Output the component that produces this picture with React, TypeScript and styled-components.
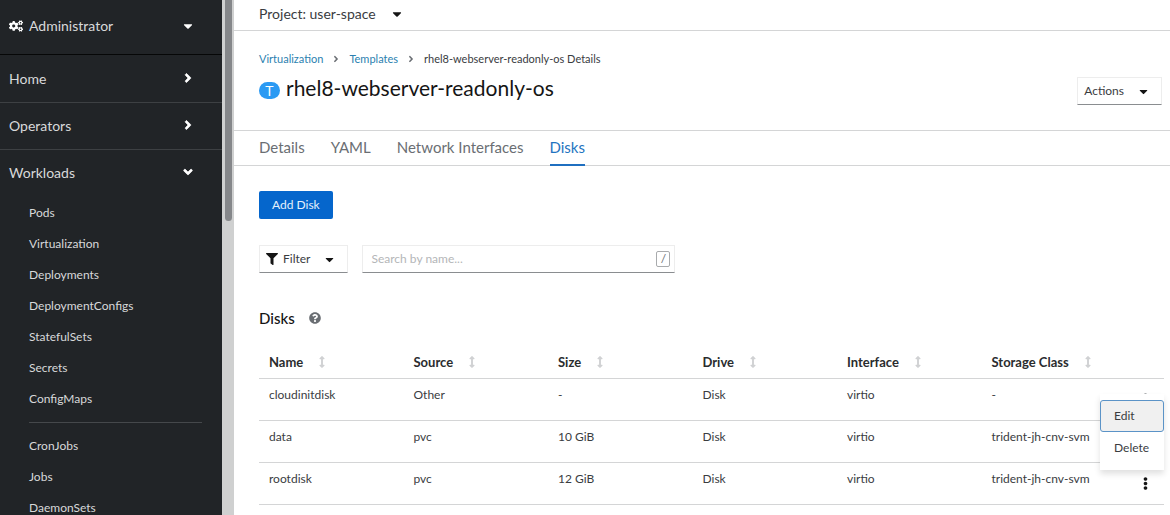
import React from "react";
import styled, { createGlobalStyle } from "styled-components";
import {
  FaAngleDown,
  FaAngleRight,
  FaArrowsAltV,
  FaCaretDown,
  FaCogs,
  FaEllipsisV,
  FaFilter,
  FaQuestionCircle,
} from "react-icons/fa";

const GlobalStyle = createGlobalStyle`
  * { box-sizing: border-box; }
  body {
    margin: 0;
    background: #fff;
    color: #3a3c3f;
    font-family: Lato, "Liberation Sans", sans-serif;
    font-size: 12px;
    line-height: 16px;
  }
  button, input { font: inherit; color: inherit; }
  button { cursor: pointer; }
  a { color: inherit; text-decoration: none; }
  ul, ol { list-style: none; margin: 0; padding: 0; }
  h1, h2 { margin: 0; }
`;

const Layout = styled.div`
  display: flex;
  height: 100vh;
  overflow: hidden;
`;

/* Sidebar */

const Sidebar = styled.aside`
  display: flex;
  flex: 0 0 234px;
`;

const Nav = styled.nav`
  flex: 1;
  overflow-y: auto;
  scrollbar-width: none;
  background: #212427;
  color: #d8d9da;
`;

const ScrollTrack = styled.div`
  width: 12px;
  padding: 0 2px 0 3px;
  background: #cfd0d0;
`;

const ScrollThumb = styled.div`
  height: 43%;
  border-radius: 0 0 4px 4px;
  background: #85878a;
`;

const Perspective = styled.button`
  display: flex;
  align-items: center;
  width: 100%;
  height: 55px;
  padding: 0 27px 2px 9px;
  border: 0;
  border-bottom: 1px solid #060707;
  background: transparent;
  font-size: 14px;
  gap: 6px;

  svg { color: #fff; }
  svg:last-child { margin-left: auto; }
`;

const Sections = styled.ul`
  padding-top: 1px;
`;

const SectionToggle = styled.button`
  display: flex;
  align-items: center;
  justify-content: space-between;
  width: 100%;
  height: 46px;
  padding: 0 27px 0 9px;
  border: 0;
  background: transparent;
  font-size: 14px;

  svg { color: #fff; margin-bottom: 2px; }
`;

const Section = styled.li`
  & + & { border-top: 1px solid #3d4043; }
`;

const SubList = styled.ul`
  padding-left: 29px;
  margin-top: 1px;
  margin-right: 20px;

  & + & { margin-top: 8px; }
  & + &::before {
    content: "";
    display: block;
    height: 1px;
    margin-bottom: 7px;
    background: #45484b;
  }
`;

const SubLink = styled.a`
  display: block;
  line-height: 31px;
`;

/* Main column */

const Main = styled.main`
  flex: 1;
  min-width: 0;
  overflow: hidden;
`;

const ProjectBar = styled.div`
  height: 31px;
  padding: 0 25px;
  border-bottom: 1px solid #d4d5d6;
`;

const ProjectButton = styled.button`
  display: flex;
  align-items: center;
  height: 28px;
  gap: 14px;
  padding: 0;
  border: 0;
  background: transparent;
  font-size: 14px;

  svg { color: #151515; }
`;

const PageHeader = styled.header`
  display: flex;
  align-items: flex-start;
  justify-content: space-between;
  height: 100px;
  padding: 20px 8px 0 25px;
  border-bottom: 1px solid #d4d5d6;
`;

const Crumbs = styled.ol`
  display: flex;
  gap: 8px;
  font-size: 11px;
`;

const Crumb = styled.li`
  display: flex;
  align-items: center;
  gap: 8px;

  a { color: #2b7fb0; }
  svg { color: #6a6e73; }
`;

const Title = styled.h1`
  display: flex;
  align-items: center;
  gap: 6px;
  margin-top: 7px;
  color: #151515;
  font-size: 21px;
  font-weight: 400;
  line-height: 28px;
`;

const Badge = styled.span`
  width: 21px;
  margin-top: 4px;
  border-radius: 9px;
  background: #2b9af3;
  color: #fff;
  font-size: 14px;
  line-height: 17px;
  text-align: center;
`;

const MenuToggle = styled.button`
  display: flex;
  align-items: center;
  height: 28px;
  padding: 0 11px 0 6px;
  border: 1px solid #ededed;
  border-bottom-color: #8a8d90;
  background: #fff;
  color: #3a3c3f;
`;

const ToggleLabel = styled.span`
  margin-right: 13px;

  svg + & { margin-left: 5px; }
`;

const ActionsSlot = styled.div`
  margin-top: 26px;
`;

const Tabs = styled.nav`
  display: flex;
  gap: 26px;
  height: 35px;
  padding: 0 25px;
  border-bottom: 1px solid #d4d5d6;
  font-size: 15px;
`;

const Tab = styled.a<{ $active?: boolean }>`
  height: 35px;
  border-bottom: 2px solid ${(p) => (p.$active ? "#1f6fc0" : "transparent")};
  color: ${(p) => (p.$active ? "#1f74c0" : "#6a6e73")};
  line-height: 33px;
`;

const Content = styled.div`
  padding: 25px 6px 0 25px;
`;

const PrimaryButton = styled.button`
  display: block;
  height: 28px;
  padding: 0 13px;
  border: 0;
  border-radius: 2px;
  background: #0566cc;
  color: #e4f0fb;
`;

const Toolbar = styled.div`
  display: flex;
  gap: 14px;
  margin-top: 26px;
`;

const SearchBox = styled.label`
  display: flex;
  align-items: center;
  width: 313px;
  height: 28px;
  padding: 0 4px 0 8px;
  border: 1px solid #ededed;
  border-bottom-color: #8a8d90;
`;

const SearchInput = styled.input`
  flex: 1;
  min-width: 0;
  padding: 0;
  border: 0;
  outline: 0;
  background: transparent;

  &::placeholder { color: #b4b6b8; opacity: 1; }
`;

const Key = styled.kbd`
  width: 14px;
  border: 1px solid #a9abad;
  border-radius: 2px;
  color: #6a6e73;
  font-family: inherit;
  line-height: 14px;
  text-align: center;
`;

const Heading = styled.div`
  display: flex;
  align-items: center;
  gap: 14px;
  margin-top: 35px;

  h2 {
    color: #151515;
    font-size: 15px;
    font-weight: 500;
    line-height: 20px;
  }
`;

const HelpButton = styled.button`
  display: flex;
  padding: 0;
  border: 0;
  background: transparent;
  color: #6a6e73;
`;

/* Disk table */

const Table = styled.table`
  width: 100%;
  margin-top: 18px;
  border-collapse: separate;
  border-spacing: 0;
  table-layout: fixed;
`;

const HeadCell = styled.th<{ $actions?: boolean }>`
  width: ${(p) => (p.$actions ? "38px" : "auto")};
  height: 33px;
  padding: 0 0 0 10px;
  border-bottom: 1px solid #d4d5d6;
  text-align: left;
`;

const SortButton = styled.button`
  display: flex;
  align-items: center;
  gap: 13px;
  padding: 0;
  border: 0;
  background: transparent;
  color: #2a2c2e;
  font-size: 13px;
  font-weight: 700;
  white-space: nowrap;

  svg { color: #d0d1d3; }
`;

const Cell = styled.td`
  height: 42px;
  padding: 8px 0 0 10px;
  border-bottom: 1px solid #d4d5d6;
  vertical-align: top;
  white-space: nowrap;
`;

const ActionsCell = styled(Cell)`
  padding: 0;
`;

const KebabWrap = styled.div`
  position: relative;
  display: flex;
  align-items: center;
  justify-content: center;
  height: 41px;
`;

const Kebab = styled.button<{ $open?: boolean }>`
  display: flex;
  padding: 2px 8px;
  border: 0;
  background: transparent;
  color: ${(p) => (p.$open ? "#8a8d90" : "#151515")};
`;

const Menu = styled.ul`
  position: absolute;
  top: 15px;
  right: 0;
  z-index: 1;
  width: 64px;
  padding: 6px 0;
  background: #fff;
  box-shadow: 0 4px 6px rgba(3, 3, 3, 0.12);
`;

const MenuItem = styled.button<{ $focused?: boolean }>`
  display: block;
  width: 100%;
  height: 32px;
  padding: 0 0 0 13px;
  border: 1px solid ${(p) => (p.$focused ? "#5b93c7" : "transparent")};
  border-radius: 3px;
  background: ${(p) => (p.$focused ? "#f0f0f0" : "transparent")};
  text-align: left;
`;

const workloads = [
  ["Pods", "Virtualization", "Deployments", "DeploymentConfigs", "StatefulSets", "Secrets", "ConfigMaps"],
  ["CronJobs", "Jobs", "DaemonSets"],
];

const columns = ["Name", "Source", "Size", "Drive", "Interface", "Storage Class"];

const disks = [
  ["cloudinitdisk", "Other", "-", "Disk", "virtio", "-"],
  ["data", "pvc", "10 GiB", "Disk", "virtio", "trident-jh-cnv-svm"],
  ["rootdisk", "pvc", "12 GiB", "Disk", "virtio", "trident-jh-cnv-svm"],
];

function SideNav() {
  return (
    <Sidebar>
      <Nav aria-label="Primary">
        <Perspective aria-haspopup="listbox">
          <FaCogs size={14} />
          Administrator
          <FaCaretDown size={14} />
        </Perspective>
        <Sections>
          {["Home", "Operators"].map((name) => (
            <Section key={name}>
              <SectionToggle aria-expanded={false}>
                {name}
                <FaAngleRight size={14} stroke="#fff" strokeWidth={24} />
              </SectionToggle>
            </Section>
          ))}
          <Section>
            <SectionToggle aria-expanded>
              Workloads
              <FaAngleDown size={14} stroke="#fff" strokeWidth={24} />
            </SectionToggle>
            {workloads.map((group) => (
              <SubList key={group[0]}>
                {group.map((item) => (
                  <li key={item}>
                    <SubLink href="#">{item}</SubLink>
                  </li>
                ))}
              </SubList>
            ))}
          </Section>
        </Sections>
      </Nav>
      <ScrollTrack>
        <ScrollThumb />
      </ScrollTrack>
    </Sidebar>
  );
}

export default function App() {
  return (
    <Layout>
      <GlobalStyle />
      <SideNav />
      <Main>
        <ProjectBar>
          <ProjectButton aria-haspopup="listbox">
            Project: user-space
            <FaCaretDown size={14} />
          </ProjectButton>
        </ProjectBar>
        <PageHeader>
          <div>
            <Crumbs>
              <Crumb>
                <a href="#">Virtualization</a>
                <FaAngleRight size={10} />
              </Crumb>
              <Crumb>
                <a href="#">Templates</a>
                <FaAngleRight size={10} />
              </Crumb>
              <Crumb>rhel8-webserver-readonly-os Details</Crumb>
            </Crumbs>
            <Title>
              <Badge>T</Badge>
              rhel8-webserver-readonly-os
            </Title>
          </div>
          <ActionsSlot>
            <MenuToggle aria-haspopup="menu">
              <ToggleLabel>Actions</ToggleLabel>
              <FaCaretDown size={13} color="#151515" />
            </MenuToggle>
          </ActionsSlot>
        </PageHeader>
        <Tabs>
          <Tab href="#">Details</Tab>
          <Tab href="#">YAML</Tab>
          <Tab href="#">Network Interfaces</Tab>
          <Tab href="#" $active aria-current="page">
            Disks
          </Tab>
        </Tabs>
        <Content>
          <PrimaryButton>Add Disk</PrimaryButton>
          <Toolbar>
            <MenuToggle aria-haspopup="menu">
              <FaFilter size={12} color="#151515" />
              <ToggleLabel>Filter</ToggleLabel>
              <FaCaretDown size={13} color="#151515" />
            </MenuToggle>
            <SearchBox>
              <SearchInput type="text" placeholder="Search by name..." aria-label="Search by name" />
              <Key>/</Key>
            </SearchBox>
          </Toolbar>
          <Heading>
            <h2>Disks</h2>
            <HelpButton aria-label="Help">
              <FaQuestionCircle size={12} />
            </HelpButton>
          </Heading>
          <Table>
            <thead>
              <tr>
                {columns.map((name) => (
                  <HeadCell key={name}>
                    <SortButton>
                      {name}
                      <FaArrowsAltV size={12} />
                    </SortButton>
                  </HeadCell>
                ))}
                <HeadCell $actions aria-label="Actions" />
              </tr>
            </thead>
            <tbody>
              {disks.map((row, index) => (
                <tr key={row[0]}>
                  {row.map((value, i) => (
                    <Cell key={columns[i]}>{value}</Cell>
                  ))}
                  <ActionsCell>
                    <KebabWrap>
                      <Kebab $open={index === 0} aria-label={`Actions for ${row[0]}`}>
                        <FaEllipsisV size={13} />
                      </Kebab>
                      {index === 0 && (
                        <Menu>
                          <li>
                            <MenuItem $focused>Edit</MenuItem>
                          </li>
                          <li>
                            <MenuItem>Delete</MenuItem>
                          </li>
                        </Menu>
                      )}
                    </KebabWrap>
                  </ActionsCell>
                </tr>
              ))}
            </tbody>
          </Table>
        </Content>
      </Main>
    </Layout>
  );
}
